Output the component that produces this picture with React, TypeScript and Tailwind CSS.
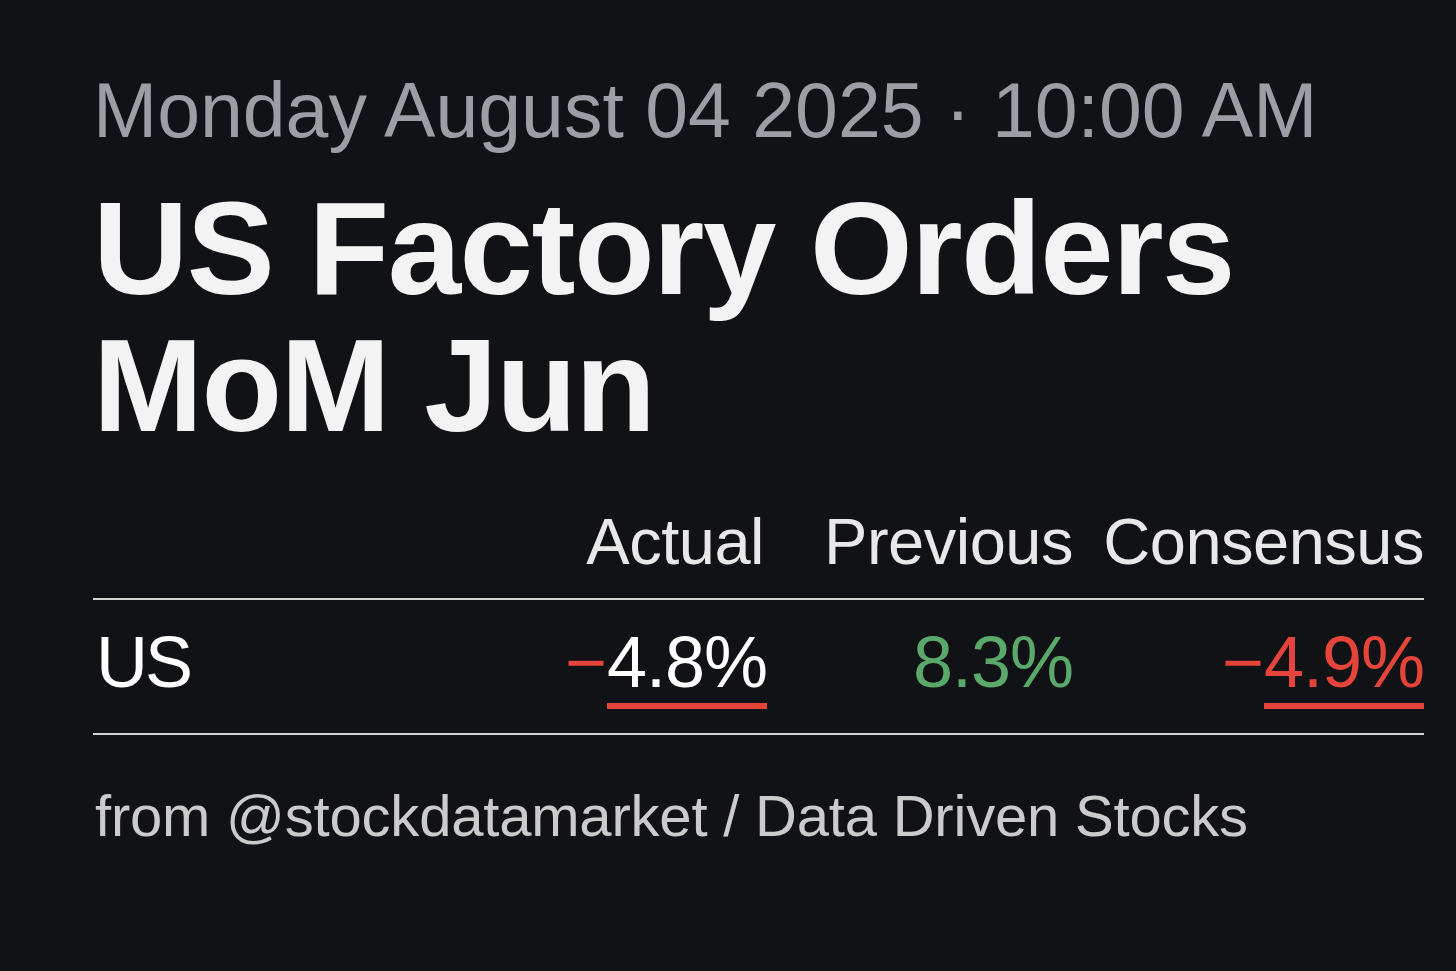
import React from "react";

const font = { fontFamily: '"Liberation Sans", Arial, sans-serif' };

const App = () => {
  return (
    <div className="w-[1456px] h-[971px] bg-[#111215] pl-[93px] pr-[32px] overflow-hidden" style={font}>
      <div className="pt-[72px] text-[77px] leading-[77px] text-[#9b9fa5] whitespace-nowrap">
        Monday August 04 2025 · 10:00 AM
      </div>

      <h1 className="mt-[31px] text-[132px] leading-[137px] font-bold tracking-[-1.5px] text-[#f3f3f3]">
        <div>US Factory Orders</div>
        <div>MoM Jun</div>
      </h1>

      <div className="mt-[55px] grid grid-cols-[1fr_200px_306px_351px] text-[65px] leading-[65px] text-[#e8e8e8] tracking-[-0.5px] pb-[24px] border-b-2 border-[#d4d4d4]">
        <div />
        <div className="text-right pr-[3px]">Actual</div>
        <div className="text-right">Previous</div>
        <div className="text-right">Consensus</div>
      </div>

      <div className="grid grid-cols-[1fr_200px_306px_351px] items-start pt-[26px] pb-[24px] border-b-2 border-[#d4d4d4] text-[72px] leading-[72px] tracking-[-1px]">
        <div className="text-white pl-[3px] tracking-[-3px]">US</div>
        <div className="flex justify-end items-start">
          <span className="text-[#e5443b] mr-[1px]">−</span>
          <span className="text-white border-b-[6px] border-[#e5443b] pb-[5px]">4.8%</span>
        </div>
        <div className="text-right text-[#5aa96b]">8.3%</div>
        <div className="flex justify-end items-start">
          <span className="text-[#e5443b] mr-[1px]">−</span>
          <span className="text-[#e5443b] border-b-[6px] border-[#e5443b] pb-[5px]">4.9%</span>
        </div>
      </div>

      <div className="mt-[52px] pl-[2px] text-[58px] leading-[58px] tracking-[-0.2px] text-[#cbcbcb] whitespace-nowrap">
        from @stockdatamarket / Data Driven Stocks
      </div>
    </div>
  );
};

export default App;
